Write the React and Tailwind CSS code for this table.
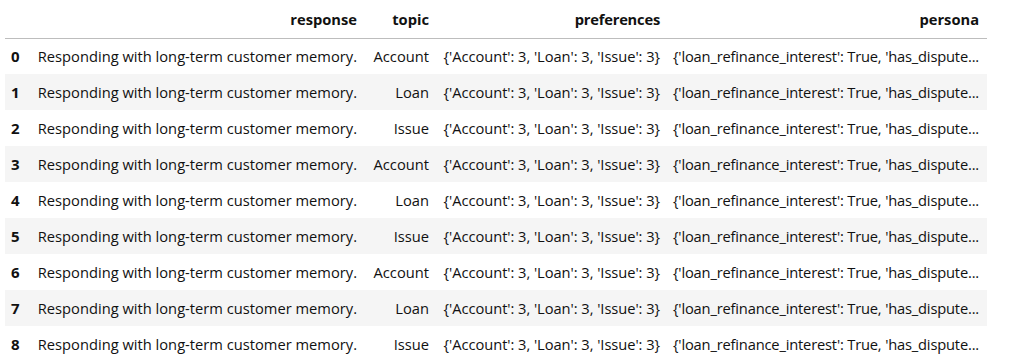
const rows = [
  ["Account"],
  ["Loan"],
  ["Issue"],
  ["Account"],
  ["Loan"],
  ["Issue"],
  ["Account"],
  ["Loan"],
  ["Issue"],
];

export default function App() {
  return (
    <div className="w-[1024px] h-[363px] bg-white overflow-hidden text-[#111] font-['Open_Sans',sans-serif] text-[14.7px]">
      <table className="ml-[5px] w-[982px] table-fixed border-collapse">
        <colgroup>
          <col className="w-[22px]" />
          <col className="w-[338px]" />
          <col className="w-[72px]" />
          <col className="w-[231px]" />
          <col className="w-[319px]" />
        </colgroup>
        <thead>
          <tr className="h-[38px] border-b border-[#bdbdbd]">
            <th></th>
            <th className="text-right font-bold pr-[8px]">response</th>
            <th className="text-right font-bold pr-[8px]">topic</th>
            <th className="text-right font-bold pr-[8px] tracking-[-0.2px]">preferences</th>
            <th className="text-right font-bold pr-[8px]">persona</th>
          </tr>
        </thead>
        <tbody>
          {rows.map((r, i) => (
            <tr key={i} className={"h-[36px] " + (i % 2 === 1 ? "bg-[#f5f5f5]" : "")}>
              <td className="font-bold pl-[6px] text-[15px]">{i}</td>
              <td className="text-right pr-[8px] whitespace-nowrap">Responding with long-term customer memory.</td>
              <td className="text-right pr-[8px] whitespace-nowrap">{r[0]}</td>
              <td className="text-right pr-[8px] whitespace-nowrap tracking-[-0.05px]">{"{'Account': 3, 'Loan': 3, 'Issue': 3}"}</td>
              <td className="text-right pr-[8px] whitespace-nowrap overflow-hidden tracking-[-0.18px]">{"{'loan_refinance_interest': True, 'has_dispute..."}</td>
            </tr>
          ))}
        </tbody>
      </table>
    </div>
  );
}
